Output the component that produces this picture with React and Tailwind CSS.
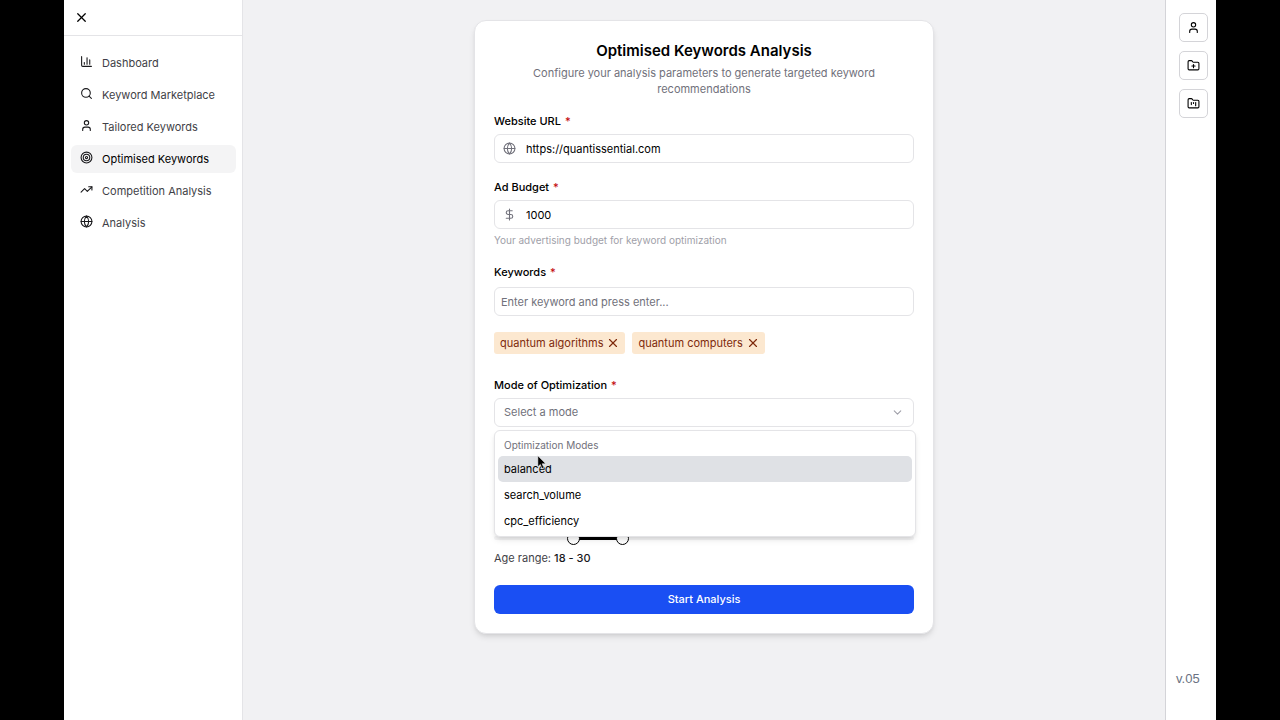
import React, { useState } from 'react';
import {
    ChartColumn,
    ChevronDown,
    DollarSign,
    FolderKanban,
    FolderPlus,
    Globe,
    Search,
    Target,
    TrendingUp,
    User,
    X,
} from 'lucide-react';

const navItems = [
    { name: 'Dashboard', icon: ChartColumn },
    { name: 'Keyword Marketplace', icon: Search },
    { name: 'Tailored Keywords', icon: User },
    { name: 'Optimised Keywords', icon: Target },
    { name: 'Competition Analysis', icon: TrendingUp },
    { name: 'Analysis', icon: Globe },
];

const quickActions = [
    { name: 'Profile', icon: User },
    { name: 'New project', icon: FolderPlus },
    { name: 'Projects', icon: FolderKanban },
];

const modes = ['balanced', 'search_volume', 'cpc_efficiency'];

const inputClass =
    'block h-[29px] w-full rounded-md border border-zinc-200 bg-white text-[11px] text-black outline-none placeholder:text-zinc-500';

const thumbClass =
    'pointer-events-none absolute inset-0 m-0 h-4 w-full appearance-none bg-transparent [&::-webkit-slider-thumb]:pointer-events-auto [&::-webkit-slider-thumb]:size-[13px] [&::-webkit-slider-thumb]:appearance-none [&::-webkit-slider-thumb]:rounded-full [&::-webkit-slider-thumb]:border [&::-webkit-slider-thumb]:border-black [&::-webkit-slider-thumb]:bg-white';

const Label = ({ htmlFor, children }) => (
    <label htmlFor={htmlFor} className="block text-[11px] leading-4 font-medium text-black">
        {children} <span className="ml-px text-red-700">*</span>
    </label>
);

const Sidebar = () => {
    const [active, setActive] = useState('Optimised Keywords');

    return (
        <aside className="w-[179px] shrink-0 border-r border-zinc-200 bg-white">
            <div className="flex h-9 items-center border-b border-zinc-200 px-2.5">
                <button type="button" aria-label="Close sidebar" className="text-black">
                    <X className="size-[15px]" />
                </button>
            </div>
            <nav className="flex flex-col gap-1 pt-[13px] pr-1.5 pl-[7px]">
                {navItems.map(({ name, icon: Icon }) => (
                    <a
                        key={name}
                        href="#"
                        onClick={() => setActive(name)}
                        className={`flex h-7 items-center gap-[9px] rounded-md px-[9px] text-[11px] whitespace-nowrap ${
                            active === name ? 'bg-zinc-100 text-black' : 'text-zinc-700'
                        }`}
                    >
                        <Icon className="mb-[3px] size-[13px] shrink-0 text-zinc-900" />
                        {name}
                    </a>
                ))}
            </nav>
        </aside>
    );
};

const QuickBar = () => (
    <aside className="flex w-[51px] shrink-0 flex-col justify-between border-l border-zinc-300 bg-white pt-[13px] pb-8">
        <div className="flex flex-col gap-[9px] pl-[13px]">
            {quickActions.map(({ name, icon: Icon }) => (
                <button
                    key={name}
                    type="button"
                    aria-label={name}
                    className="flex size-[29px] items-center justify-center rounded-[5px] border border-zinc-300 bg-white text-black"
                >
                    <Icon className="size-[13px]" />
                </button>
            ))}
        </div>
        <p className="pl-2.5 font-['Liberation_Sans',sans-serif] text-[13px] leading-[18px] text-gray-500">v.05</p>
    </aside>
);

// Options list shown under the select
const ModeMenu = ({ onPick }) => (
    <div className="absolute top-full -right-0.5 left-0 z-10 mt-[3px] rounded-md border border-zinc-200 bg-white px-[3px] pt-[3px] pb-0.5 shadow-md">
        <p className="px-1.5 py-1 text-[10px] leading-[14px] text-zinc-500">Optimization Modes</p>
        <ul role="listbox" aria-label="Optimization Modes">
            {modes.map((mode, i) => (
                <li
                    key={mode}
                    role="option"
                    aria-selected={i === 0}
                    onClick={() => onPick(mode)}
                    className={`rounded-[5px] px-1.5 py-[5px] text-[11px] leading-4 text-black ${
                        i === 0 ? 'bg-[#dfe1e5]' : ''
                    }`}
                >
                    {mode}
                </li>
            ))}
        </ul>
        <svg viewBox="0 0 12 18" className="absolute top-6 left-[42px] h-[15px] w-2.5" aria-hidden="true">
            <path
                d="M1 1v13.2l3-2.9 2 4.9 2.2-.9-2-4.8h4.3z"
                fill="#000"
                stroke="#fff"
                strokeWidth="0.6"
            />
        </svg>
    </div>
);

const AgeRange = () => {
    const [range, setRange] = useState([18, 30]);
    const [min, max] = range;

    return (
        <div>
            <div className="relative flex h-4 items-center">
                <div className="relative h-1 w-full rounded-full bg-zinc-100">
                    <div
                        className="absolute inset-y-0 bg-black"
                        style={{ left: `${min}%`, right: `${100 - max}%` }}
                    />
                </div>
                <input
                    type="range"
                    aria-label="Minimum age"
                    value={min}
                    onChange={(e) => setRange([Math.min(Number(e.target.value), max), max])}
                    className={thumbClass}
                />
                <input
                    type="range"
                    aria-label="Maximum age"
                    value={max}
                    onChange={(e) => setRange([min, Math.max(Number(e.target.value), min)])}
                    className={thumbClass}
                />
            </div>
            <p className="mt-1 text-[11px] leading-4 text-zinc-700">
                Age range: <span className="font-medium text-zinc-900">{min} - {max}</span>
            </p>
        </div>
    );
};

const AnalysisForm = () => {
    const [url, setUrl] = useState('https://quantissential.com');
    const [budget, setBudget] = useState('1000');
    const [draft, setDraft] = useState('');
    const [keywords, setKeywords] = useState(['quantum algorithms', 'quantum computers']);
    const [mode, setMode] = useState('');
    const [menuOpen, setMenuOpen] = useState(true);

    const addKeyword = (e) => {
        if (e.key !== 'Enter') return;
        e.preventDefault();
        if (draft.trim()) setKeywords([...keywords, draft.trim()]);
        setDraft('');
    };

    return (
        <form
            onSubmit={(e) => e.preventDefault()}
            className="w-full max-w-[460px] rounded-xl border border-zinc-200 bg-white px-[19px] pt-5 pb-[19px] shadow-md"
        >
            <div className="text-center">
                <h1 className="text-[15px] leading-5 font-semibold text-black">Optimised Keywords Analysis</h1>
                <p className="mx-auto mt-1 max-w-[360px] text-[11px] leading-4 text-zinc-500">
                    Configure your analysis parameters to generate targeted keyword recommendations
                </p>
            </div>

            <div className="mt-4">
                <Label htmlFor="url">Website URL</Label>
                <div className="relative mt-[5px]">
                    <Globe className="absolute top-2 left-[9px] size-[13px] text-zinc-500" />
                    <input
                        id="url"
                        type="text"
                        value={url}
                        onChange={(e) => setUrl(e.target.value)}
                        className={`${inputClass} pl-[31px]`}
                    />
                </div>
            </div>

            <div className="mt-4">
                <Label htmlFor="budget">Ad Budget</Label>
                <div className="relative mt-[5px]">
                    <DollarSign className="absolute top-2 left-[9px] size-[13px] text-zinc-500" />
                    <input
                        id="budget"
                        type="text"
                        value={budget}
                        onChange={(e) => setBudget(e.target.value)}
                        className={`${inputClass} pl-[31px]`}
                    />
                </div>
                <p className="mt-1 text-[10px] leading-[15px] text-zinc-400">
                    Your advertising budget for keyword optimization
                </p>
            </div>

            <div className="mt-4">
                <Label htmlFor="keyword">Keywords</Label>
                <input
                    id="keyword"
                    type="text"
                    value={draft}
                    placeholder="Enter keyword and press enter..."
                    onChange={(e) => setDraft(e.target.value)}
                    onKeyDown={addKeyword}
                    className={`${inputClass} mt-[7px] px-1.5`}
                />
                <div className="mt-4 flex flex-wrap gap-[7px]">
                    {keywords.map((word) => (
                        <span
                            key={word}
                            className="flex h-[22px] items-center gap-[3px] rounded-[3px] bg-[#fce8d0] pr-[5px] pl-1.5 text-[11px] text-orange-900"
                        >
                            {word}
                            <button
                                type="button"
                                aria-label={`Remove ${word}`}
                                onClick={() => setKeywords(keywords.filter((k) => k !== word))}
                            >
                                <X className="size-3.5" />
                            </button>
                        </span>
                    ))}
                </div>
            </div>

            <div className="mt-[23px]">
                <Label htmlFor="mode">Mode of Optimization</Label>
                <div className="relative mt-[5px]">
                    <select
                        id="mode"
                        value={mode}
                        onChange={(e) => setMode(e.target.value)}
                        onClick={() => setMenuOpen(true)}
                        className="block h-[29px] w-full appearance-none rounded-md border border-zinc-200 bg-white px-[9px] text-[11px] text-zinc-500 outline-none"
                    >
                        <option value="">Select a mode</option>
                        {modes.map((m) => (
                            <option key={m} value={m}>{m}</option>
                        ))}
                    </select>
                    <ChevronDown className="pointer-events-none absolute top-2 right-2.5 size-[13px] text-zinc-400" />
                    {menuOpen && (
                        <ModeMenu
                            onPick={(m) => {
                                setMode(m);
                                setMenuOpen(false);
                            }}
                        />
                    )}
                </div>
            </div>

            <div className="pt-[103px]">
                <AgeRange />
            </div>

            <button
                type="submit"
                className="mt-[19px] block h-[29px] w-full rounded-md bg-[#1a4ff3] text-[11px] font-medium text-white"
            >
                Start Analysis
            </button>
        </form>
    );
};

const App = () => {
    return (
        <div className="flex min-h-screen bg-black px-16 font-['Inter',sans-serif]">
            <Sidebar />
            <main className="flex flex-1 items-start justify-center bg-[#f1f1f3] px-4 py-5">
                <AnalysisForm />
            </main>
            <QuickBar />
        </div>
    );
};

export default App;
